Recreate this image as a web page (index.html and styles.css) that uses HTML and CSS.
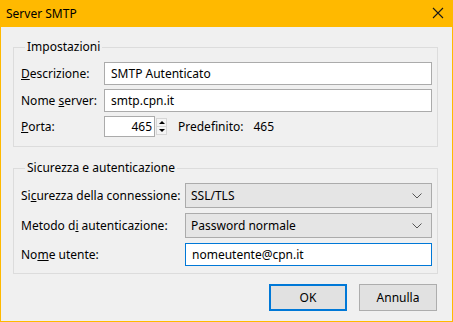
FILE: index.html
```html
<!DOCTYPE HTML>
<html lang="it">
<head>
    <meta charset="UTF-8">
    <title>Server SMTP</title>
    <link rel="stylesheet" href="styles.css">
</head>
<body>
    <div class="window">
        <div class="titlebar">
            <span class="title">Server SMTP</span>
            <span class="close">
                <svg width="12" height="12" viewBox="0 0 12 12">
                    <path d="M1 1 L11 11 M11 1 L1 11" stroke="#1a1a1a" stroke-width="1.1" fill="none"/>
                </svg>
            </span>
        </div>

        <div class="content">
            <fieldset class="group settings">
                <legend>Impostazioni</legend>
                <div class="form-grid">
                    <label class="field-label"><u>D</u>escrizione:</label>
                    <div class="textbox">SMTP Autenticato</div>

                    <label class="field-label">Nome <u>s</u>erver:</label>
                    <div class="textbox">smtp.cpn.it</div>

                    <label class="field-label"><u>P</u>orta:</label>
                    <div class="port-row">
                        <div class="textbox port">465</div>
                        <div class="spinner">
                            <span class="spin-up"></span>
                            <span class="spin-down"></span>
                        </div>
                        <span class="default-label">Predefinito:</span>
                        <span class="default-value">465</span>
                    </div>
                </div>
            </fieldset>

            <fieldset class="group security">
                <legend>Sicurezza e autenticazione</legend>
                <div class="form-grid wide">
                    <label class="field-label">Si<u>c</u>urezza della connessione:</label>
                    <div class="dropdown">
                        <span>SSL/TLS</span>
                        <svg width="10" height="6" viewBox="0 0 10 6">
                            <path d="M0.5 0.5 L5 5 L9.5 0.5" stroke="#555" stroke-width="1" fill="none"/>
                        </svg>
                    </div>

                    <label class="field-label">Metodo d<u>i</u> autenticazione:</label>
                    <div class="dropdown">
                        <span>Password normale</span>
                        <svg width="10" height="6" viewBox="0 0 10 6">
                            <path d="M0.5 0.5 L5 5 L9.5 0.5" stroke="#555" stroke-width="1" fill="none"/>
                        </svg>
                    </div>

                    <label class="field-label">No<u>m</u>e utente:</label>
                    <div class="textbox focused">nomeutente@cpn.it</div>
                </div>
            </fieldset>

            <div class="actions">
                <button class="btn default">OK</button>
                <button class="btn">Annulla</button>
            </div>
        </div>
    </div>
</body>
</html>
```

FILE: styles.css
```css
:root {
    --accent: #FFB900;
    --face: #F0F0F0;
    --group-border: #DCDCDC;
    --box-border: #ABABAB;
    --focus: #0078D7;
    --button-bg: #E1E1E1;
}

* {
    box-sizing: border-box;
}

body {
    margin: 0;
    font-family: "Noto Sans", "Open Sans", sans-serif;
    font-size: 12px;
    color: #000;
}

.window {
    width: 453px;
    height: 322px;
    background-color: var(--face);
    border: 1px solid var(--accent);
    border-top: none;
    display: flex;
    flex-direction: column;
}

.titlebar {
    height: 27px;
    background-color: var(--accent);
    display: flex;
    align-items: center;
    justify-content: space-between;
    padding: 0 9px 1px 5px;
    margin: 0 -1px;
}

.title {
    padding-left: 1px;
}

.close {
    display: flex;
}

.content {
    padding: 0 14px 0 12px;
}

.group {
    margin: 12px 0 0;
    padding: 7px 5px 9px 7px;
    border: 1px solid var(--group-border);
    min-width: 0;
}

.group legend {
    padding: 0 2px;
    margin-left: 4px;
    line-height: 16px;
}

.group.security {
    margin-top: 13px;
    padding-bottom: 7px;
}

.form-grid {
    display: grid;
    grid-template-columns: 83px 1fr;
    row-gap: 4px;
    align-items: center;
}

.form-grid.wide {
    grid-template-columns: 164px 1fr;
    row-gap: 5px;
}

.field-label u {
    text-decoration-thickness: 1px;
}

.textbox {
    height: 23px;
    background: #fff;
    border: 1px solid var(--box-border);
    padding: 0 6px;
    display: flex;
    align-items: center;
}

.textbox.focused {
    border-color: var(--focus);
}

.port-row {
    display: flex;
    align-items: center;
    height: 21px;
}

.textbox.port {
    width: 51px;
    height: 21px;
    justify-content: flex-end;
    padding: 0 2px;
}

.spinner {
    width: 11px;
    height: 17px;
    margin-left: 1px;
    border: 1px solid #D6D6D6;
    background: #F4F4F4;
    display: flex;
    flex-direction: column;
}

.spinner span {
    flex: 1;
    display: flex;
    align-items: center;
    justify-content: center;
}

.spinner span::before {
    content: "";
    border-left: 3px solid transparent;
    border-right: 3px solid transparent;
}

.spin-up::before {
    border-bottom: 3px solid #000;
}

.spin-down::before {
    border-top: 3px solid #000;
}

.spin-up {
    border-bottom: 1px solid #D6D6D6;
}

.default-label {
    margin-left: 11px;
}

.default-value {
    margin-left: 10px;
}

.dropdown {
    height: 25px;
    background: #E5E5E5;
    border: 1px solid var(--box-border);
    padding: 0 9px 0 5px;
    display: flex;
    align-items: center;
    justify-content: space-between;
}

.actions {
    display: flex;
    justify-content: flex-end;
    gap: 12px;
    margin-top: 10px;
    padding-right: 1px;
}

.btn {
    width: 78px;
    height: 27px;
    font: inherit;
    color: #000;
    background: var(--button-bg);
    border: 1px solid #ADADAD;
    padding: 0;
}

.btn.default {
    border: 2px solid var(--focus);
}
```
